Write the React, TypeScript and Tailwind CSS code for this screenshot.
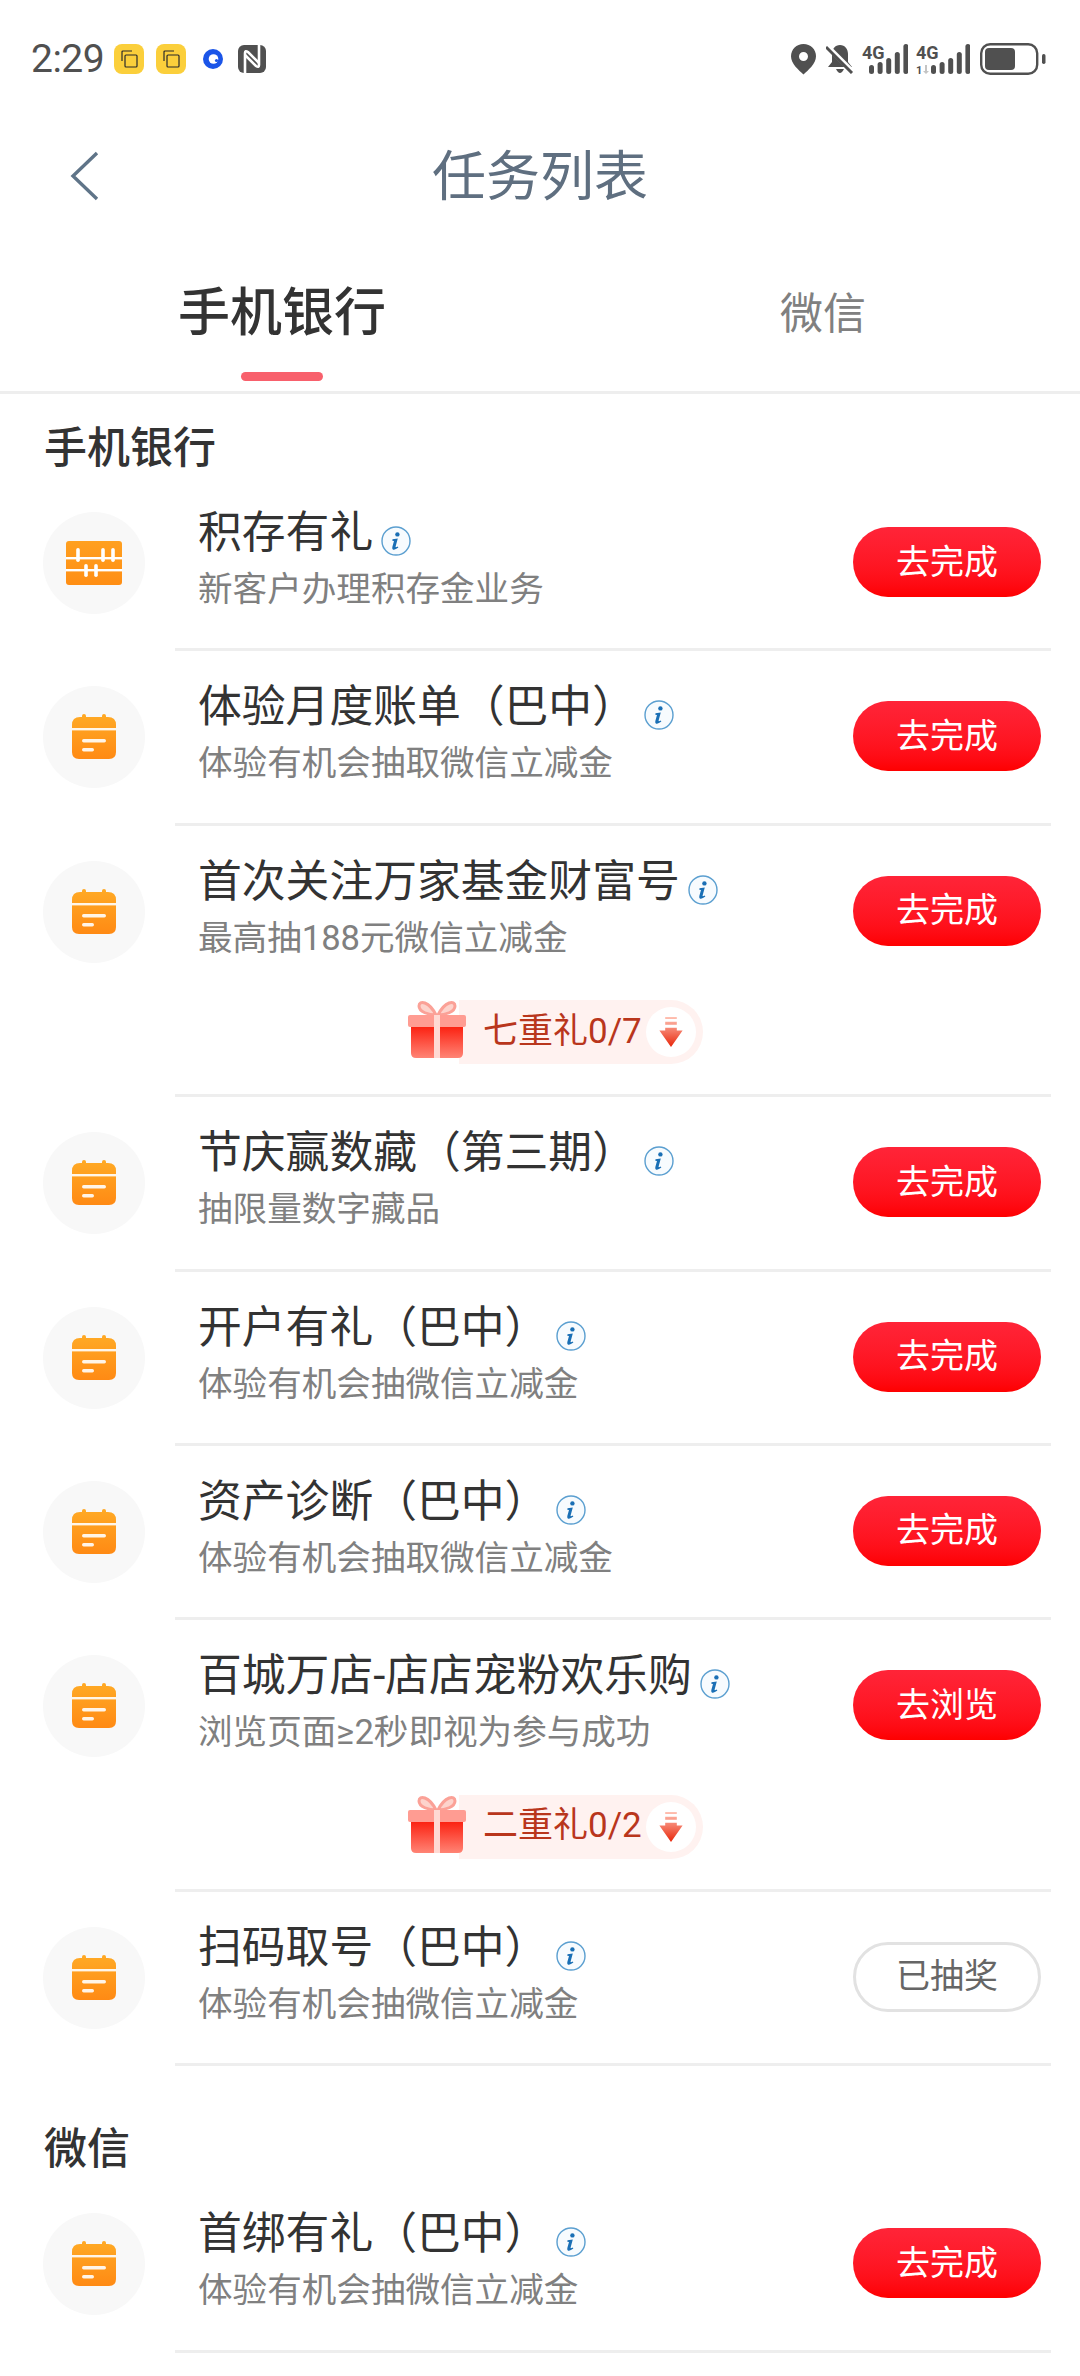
import { useId } from 'react';

const cjk = { fontFamily: 'Roboto, "Noto Sans CJK SC", sans-serif' };

function InfoIcon() {
  return (
    <svg width="30" height="30" viewBox="0 0 30 30" className="shrink-0">
      <circle cx="15" cy="15" r="14" fill="#f7fbfe" stroke="#5b9fd0" strokeWidth="1.4" />
      <circle cx="16.4" cy="8.4" r="2.2" fill="#1a6fb5" />
      <path d="M11.5 13.2 L16.8 12.4 L14.6 20.6 Q14.4 22 16.6 20.6 L17.4 21.6 Q13.6 24.6 11.8 23.4 Q10.8 22.6 11.4 20.8 L13 15 L11.3 14.8 Z" fill="#1a6fb5" />
    </svg>
  );
}

function CalendarIcon() {
  const id = useId();
  return (
    <svg width="46" height="46" viewBox="0 0 46 46">
      <defs>
        <linearGradient id={id} x1="0" y1="0" x2="0" y2="1">
          <stop offset="0" stopColor="#ffa824" />
          <stop offset="1" stopColor="#ff8a14" />
        </linearGradient>
      </defs>
      <rect x="11" y="0" width="4" height="6" rx="2" fill="#ffa824" />
      <rect x="31" y="0" width="4" height="6" rx="2" fill="#ffa824" />
      <path d="M1 11 Q1 3 9 3 H37 Q45 3 45 11 V38 Q45 45 38 45 H8 Q1 45 1 38 Z" fill={`url(#${id})`} />
      <rect x="1" y="14" width="44" height="2.4" fill="#fff" fillOpacity="0.9" />
      <rect x="11" y="25" width="24" height="3.4" rx="1.7" fill="#fff" fillOpacity="0.9" />
      <rect x="11" y="34" width="12" height="3.4" rx="1.7" fill="#fff" fillOpacity="0.9" />
    </svg>
  );
}

function AbacusIcon() {
  const id = useId();
  return (
    <svg width="56" height="44" viewBox="0 0 56 44">
      <defs>
        <linearGradient id={id} x1="0" y1="0" x2="0" y2="1">
          <stop offset="0" stopColor="#ffa020" />
          <stop offset="1" stopColor="#ff8e14" />
        </linearGradient>
      </defs>
      <rect x="0" y="0" width="56" height="44" rx="3" fill={`url(#${id})`} />
      <rect x="0" y="16" width="56" height="2.4" fill="#fff" />
      <rect x="0" y="28" width="56" height="2.4" fill="#fff" />
      {[12, 37, 47].map((x) => (
        <rect key={x} x={x - 1.8} y="7" width="3.6" height="14" rx="1.8" fill="#fff" />
      ))}
      {[20, 30].map((x) => (
        <rect key={x} x={x - 1.8} y="23" width="3.6" height="13" rx="1.8" fill="#fff" />
      ))}
    </svg>
  );
}

function GiftIcon() {
  const id = useId();
  return (
    <svg width="60" height="60" viewBox="0 0 60 60" className="shrink-0">
      <defs>
        <linearGradient id={id} x1="0" y1="0" x2="0" y2="1">
          <stop offset="0" stopColor="#fb1c0c" />
          <stop offset="1" stopColor="#ff8475" />
        </linearGradient>
      </defs>
      <path d="M29 15 C22 1 12 0 12 6 C12 12 22 15 29 15 Z" fill="#fdd3cc" stroke="#fba197" strokeWidth="3" />
      <path d="M31 15 C38 1 48 0 48 6 C48 12 38 15 31 15 Z" fill="#fdd3cc" stroke="#fba197" strokeWidth="3" />
      <path d="M4 25 H56 V53 Q56 58 51 58 H9 Q4 58 4 53 Z" fill={`url(#${id})`} />
      <rect x="1" y="15" width="58" height="12" rx="2" fill="#ff9c92" />
      <rect x="27" y="15" width="6" height="43" fill="#ffd9d3" />
    </svg>
  );
}

function DownBadge() {
  const id = useId();
  return (
    <div className="flex h-[50px] w-[50px] shrink-0 items-center justify-center rounded-full bg-white">
      <svg width="24" height="30" viewBox="0 0 24 31">
        <defs>
          <linearGradient id={id} x1="0" y1="0" x2="0" y2="1">
            <stop offset="0" stopColor="#ffc2b4" />
            <stop offset="1" stopColor="#e8260a" />
          </linearGradient>
        </defs>
        <path d="M6 0 H18 V2 H6 Z M6 5 H18 V8 H6 Z M6 11 H18 V14 H24 L12 31 L0 14 H6 Z" fill={`url(#${id})`} />
      </svg>
    </div>
  );
}

function SignalIcon({ second }: { second?: boolean }) {
  const left = second ? 15 : 7;
  const width = second ? 54 : 46;
  const heights = [9, 12, 16, 22, 30];
  return (
    <svg width={width} height="38" viewBox={`0 -4 ${width} 38`}>
      <text x="0" y="15" fontSize="18" fontWeight="700" fill="#505050" fontFamily="Roboto, sans-serif">4G</text>
      {second && (
        <>
          <text x="0" y="30" fontSize="11" fontWeight="700" fill="#505050" fontFamily="Roboto, sans-serif">1</text>
          <path d="M9 21 V27 H7 L10 30 L13 27 H11 V21 Z" fill="#c4c4c4" />
        </>
      )}
      {heights.map((h, i) => (
        <rect key={h} x={left + i * 8.6} y={30 - h} width="5" height={h} rx="2.5" fill="#505050" />
      ))}
    </svg>
  );
}

function StatusBar() {
  return (
    <div className="flex h-[110px] items-center justify-between pl-[31px] pr-[34px] pt-[8px] text-[#505050]">
      <div className="flex items-center">
        <span className="w-[71px] whitespace-nowrap text-[39px] leading-none tracking-[-0.5px]" style={{ fontFamily: 'Roboto, sans-serif' }}>2:29</span>
        {[0, 1].map((i) => (
          <div key={i} className="ml-[12px] flex h-[30px] w-[30px] items-center justify-center rounded-[8px] bg-[#fbcf3b]">
            <svg width="20" height="20" viewBox="0 0 20 20" fill="none" stroke="#2b2b2b" strokeWidth="1.2">
              <path d="M3 12 V3 Q3 2 4 2 H13" />
              <rect x="6" y="6" width="12" height="12" rx="1" />
            </svg>
          </div>
        ))}
        <svg width="20" height="20" viewBox="0 0 20 20" className="ml-[17px]">
          <circle cx="10" cy="10" r="10" fill="#1b55e8" />
          <circle cx="10.5" cy="10" r="4.8" fill="#fff" />
          <circle cx="13.5" cy="11.5" r="1.6" fill="#1b55e8" />
        </svg>
        <svg width="28" height="28" viewBox="0 0 28 28" className="ml-[15px]">
          <rect x="0" y="0" width="28" height="28" rx="6" fill="#505050" />
          <path d="M7 28 V8 Q7 5 10 7 L21 18" fill="none" stroke="#fff" strokeWidth="2.6" />
          <path d="M21 0 V20 Q21 23 18 21 L7 10" fill="none" stroke="#fff" strokeWidth="2.6" />
        </svg>
      </div>
      <div className="flex items-center">
        <svg width="25" height="31" viewBox="0 0 25 31">
          <path fillRule="evenodd" d="M12.5 0 C5.5 0 0 5.3 0 12.2 C0 20 8 26 12.5 30.5 C17 26 25 20 25 12.2 C25 5.3 19.5 0 12.5 0 Z M12.5 8 A4.4 4.4 0 1 1 12.5 17 A4.4 4.4 0 1 1 12.5 8 Z" fill="#505050" />
        </svg>
        <svg width="28" height="30" viewBox="0 0 28 30" className="ml-[10px]">
          <path d="M14 1 C19 1 22 5 22 10 V18 L26 23 H2 L6 18 V10 C6 5 9 1 14 1 Z M10 25 H18 Q16 29 14 29 Q12 29 10 25 Z" fill="#505050" />
          <path d="M1 2 L27 28" stroke="#fff" strokeWidth="5" />
          <path d="M0 3 L26 29" stroke="#505050" strokeWidth="3" />
        </svg>
        <span className="ml-[8px] flex"><SignalIcon /></span>
        <span className="ml-[8px] flex"><SignalIcon second /></span>
        <svg width="66" height="32" viewBox="0 0 66 32" className="ml-[10px]">
          <rect x="1.2" y="1.2" width="56" height="29.6" rx="9" fill="none" stroke="#505050" strokeWidth="2.4" />
          <rect x="5" y="5" width="30" height="22" rx="4" fill="#505050" />
          <rect x="62" y="11" width="3.5" height="10" rx="1.7" fill="#505050" />
        </svg>
      </div>
    </div>
  );
}

type Task = { title: string; sub: string; abacus?: boolean; action?: string; done?: boolean; gift?: string };

const bankTasks: Task[] = [
  { title: '积存有礼', sub: '新客户办理积存金业务', abacus: true },
  { title: '体验月度账单（巴中）', sub: '体验有机会抽取微信立减金' },
  { title: '首次关注万家基金财富号', sub: '最高抽188元微信立减金', gift: '七重礼0/7' },
  { title: '节庆赢数藏（第三期）', sub: '抽限量数字藏品' },
  { title: '开户有礼（巴中）', sub: '体验有机会抽微信立减金' },
  { title: '资产诊断（巴中）', sub: '体验有机会抽取微信立减金' },
  { title: '百城万店-店店宠粉欢乐购', sub: '浏览页面≥2秒即视为参与成功', action: '去浏览', gift: '二重礼0/2' },
  { title: '扫码取号（巴中）', sub: '体验有机会抽微信立减金', action: '已抽奖', done: true },
];

function TaskRow({ task }: { task: Task }) {
  return (
    <div className="flex pl-[43px] pr-[29px]">
      <div className="mt-[35px] flex h-[102px] w-[102px] shrink-0 items-center justify-center rounded-full bg-[#f8f8f8]">
        {task.abacus ? <AbacusIcon /> : <CalendarIcon />}
      </div>
      <div className="ml-[30px] flex-1 border-b-[3px] border-[#eeeeee]">
        <div className="flex h-[171.4px] justify-between pl-[23px] pr-[10px]">
          <div className="pt-[27px]">
            <div className="flex h-[58px] items-center whitespace-nowrap text-[43.8px] leading-[58px] text-[#333333]">
              <span>{task.title}</span>
              <span className="ml-[8px] mt-[16px]"><InfoIcon /></span>
            </div>
            <div className="mt-[3px] whitespace-nowrap text-[34.6px] leading-[48px] text-[#808080]">{task.sub}</div>
          </div>
          {task.done ? (
            <div className="mt-[50px] flex h-[70px] w-[188px] items-center justify-center rounded-full border-[3px] border-[#e2e2e2] bg-white text-[34px] text-[#666666]">
              {task.action}
            </div>
          ) : (
            <div className="mt-[50px] flex h-[70px] w-[188px] items-center justify-center rounded-full bg-gradient-to-b from-[#ff2438] to-[#fe0000] text-[34px] text-white">
              {task.action ?? '去完成'}
            </div>
          )}
        </div>
        {task.gift && (
          <div className="mt-[3px] flex h-[94px] pl-[232px]">
            <div className="z-10 flex h-[60px] items-center"><GiftIcon /></div>
            <div className="-ml-[8px] flex h-[64px] items-center rounded-r-full bg-[#fff2f0] pl-[24px] pr-[7px] text-[35px] text-[#b9361c]">
              <span className="w-[163px] whitespace-nowrap">{task.gift}</span>
              <DownBadge />
            </div>
          </div>
        )}
      </div>
    </div>
  );
}

export default function App() {
  return (
    <div className="h-[2376px] w-[1080px] overflow-hidden bg-white" style={cjk}>
      <StatusBar />
      <div className="grid h-[132px] grid-cols-[1fr_auto_1fr] items-center">
        <svg width="30" height="50" viewBox="0 0 30 50" fill="none" stroke="#5f7488" strokeWidth="3.4" className="ml-[69px]">
          <path d="M28 2 L4 25 L28 48" />
        </svg>
        <span className="pt-[4px] text-[54px] leading-[70px] text-[#5f6f80]">任务列表</span>
        <span />
      </div>
      <div className="flex h-[152px] border-b-[3px] border-[#eeeeee]">
        <div className="ml-[178px] flex w-[208px] flex-col items-center">
          <span className="mt-[37px] whitespace-nowrap text-[52px] font-medium leading-[70px] text-[#333333]">手机银行</span>
          <span className="mt-[23px] h-[9px] w-[82px] rounded-full bg-[#f8606c]" />
        </div>
        <span className="ml-[394px] mt-[42px] whitespace-nowrap text-[43px] leading-[60px] text-[#808080]">微信</span>
      </div>
      <div className="pl-[44px] pt-[24px] text-[43px] font-medium leading-[60px] text-[#333333]">手机银行</div>
      <div className="-mt-[1px]">
        {bankTasks.map((task) => (
          <TaskRow key={task.title} task={task} />
        ))}
      </div>
      <div className="pl-[44px] pt-[54px] text-[43px] font-medium leading-[58px] text-[#333333]">微信</div>
      <TaskRow task={{ title: '首绑有礼（巴中）', sub: '体验有机会抽微信立减金' }} />
    </div>
  );
}
